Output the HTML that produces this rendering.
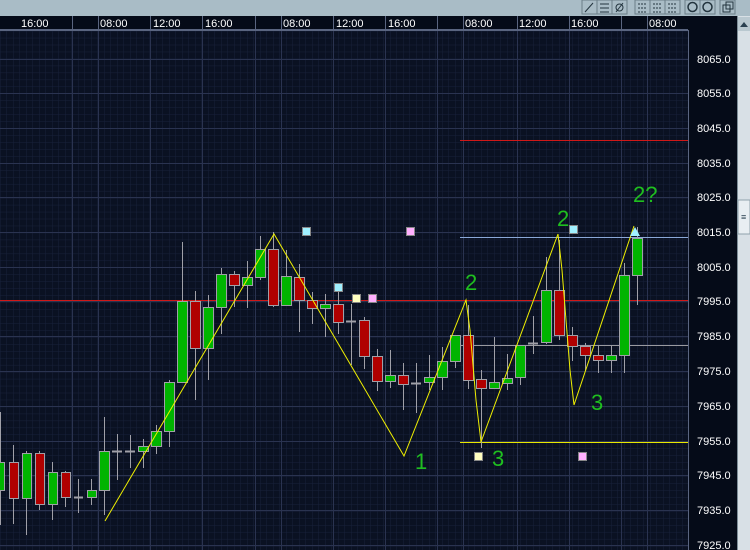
<!DOCTYPE html>
<html><head><meta charset="utf-8"><style>
body{margin:0;width:750px;height:550px;overflow:hidden;background:#a9bcc6;font-family:"Liberation Sans",sans-serif}
svg{position:absolute;left:0;top:0}
</style></head><body>
<svg width="750" height="550" xmlns="http://www.w3.org/2000/svg" font-family="Liberation Sans, sans-serif">
<defs>
<pattern id="mn" x="0" y="3" width="6.5" height="6.96" patternUnits="userSpaceOnUse">
<path d="M0 0H6.5M0 0V6.96" stroke="#18213a" stroke-width="1" fill="none"/></pattern>
</defs>
<rect x="0" y="0" width="750" height="16" fill="#a9bcc6"/>
<rect x="0" y="16" width="737" height="534" fill="#050b18"/>
<rect x="0" y="30" width="688" height="520" fill="#0a1122"/>
<rect x="0" y="30" width="688" height="520" fill="url(#mn)"/>
<g stroke="#2a3350" stroke-width="1">
<path d="M0 59.5H688M0 93.5H688M0 128.5H688M0 163.5H688M0 197.5H688M0 232.5H688M0 267.5H688M0 301.5H688M0 336.5H688M0 371.5H688M0 406.5H688M0 441.5H688M0 475.5H688M0 510.5H688M0 545.5H688"/>
<path d="M72.5 30V550M150.5 30V550M255.5 30V550M333.5 30V550M437.5 30V550M517.5 30V550M621.5 30V550M98.5 30V550M202.5 30V550M281.5 30V550M385.5 30V550M463.5 30V550M569.5 30V550M647.5 30V550"/>
</g>
<path d="M688.5 30V550M0 30.5H688" stroke="#5a6580"/>
<!-- time axis -->
<g stroke="#5a6580"><path d="M72.5 16V30M98.5 16V30M150.5 16V30M202.5 16V30M255.5 16V30M281.5 16V30M333.5 16V30M385.5 16V30M437.5 16V30M463.5 16V30M517.5 16V30M569.5 16V30M621.5 16V30M647.5 16V30M0 29.5H688"/></g>
<g fill="#fff" font-size="11">
<text x="21" y="27">16:00</text><text x="100" y="27">08:00</text><text x="153" y="27">12:00</text><text x="205" y="27">16:00</text>
<text x="283" y="27">08:00</text><text x="336" y="27">12:00</text><text x="388" y="27">16:00</text>
<text x="465" y="27">08:00</text><text x="519" y="27">12:00</text><text x="571" y="27">16:00</text><text x="649" y="27">08:00</text>
</g>
<!-- price axis -->
<g fill="#fff" font-size="11">
<text x="697" y="63">8065.0</text><text x="697" y="97">8055.0</text><text x="697" y="132">8045.0</text><text x="697" y="167">8035.0</text>
<text x="697" y="201">8025.0</text><text x="697" y="236">8015.0</text><text x="697" y="271">8005.0</text><text x="697" y="305">7995.0</text>
<text x="697" y="340">7985.0</text><text x="697" y="375">7975.0</text><text x="697" y="410">7965.0</text><text x="697" y="445">7955.0</text>
<text x="697" y="479">7945.0</text><text x="697" y="514">7935.0</text><text x="697" y="549">7925.0</text>
</g>
<!-- scrollbar -->
<rect x="737" y="16" width="13" height="534" fill="#d8e0e6"/>
<path d="M737.5 16V550" stroke="#7d8e98"/>
<rect x="738" y="17" width="12" height="14" fill="#b9c8d0"/>
<path d="M740 27L744 22L748 27Z" fill="#2a4050"/>
<rect x="738" y="200" width="12" height="34" fill="#e8eef2" stroke="#8fa2ac"/>
<text x="741" y="220" font-size="9" fill="#2a4050">≡</text>
<!-- toolbar -->
<g stroke="#6c7e88" fill="#a9bcc6">
<rect x="582" y="0" width="15" height="14"/><rect x="597" y="0" width="15" height="14"/><rect x="612" y="0" width="15" height="14"/>
<rect x="635" y="0" width="15" height="14"/><rect x="650" y="0" width="15" height="14"/><rect x="665" y="0" width="15" height="14"/>
<rect x="685" y="0" width="15" height="14"/><rect x="700" y="0" width="15" height="14"/><rect x="720" y="0" width="15" height="14"/>
</g>
<g stroke="#23343e" fill="none" stroke-width="1">
<path d="M585 12L593 3"/><path d="M600 4H609M600 8H609M600 12H609"/><circle cx="619.5" cy="7.5" r="3.5"/><path d="M616 12L623 3"/>
<path d="M638 4H647M638 8H647M638 12H647M653 4H662M653 8H662M653 12H662M668 4H677M668 8H677M668 12H677" stroke-dasharray="2 1"/>
<circle cx="692.5" cy="7" r="4.5" stroke-width="1.5"/><circle cx="707.5" cy="7" r="4.5" stroke-width="1.5"/>
<rect x="723" y="5" width="7" height="7"/><rect x="726" y="2" width="7" height="7"/>
</g>
<!-- horizontal lines -->
<path d="M0 300.5H688" stroke="#d01818"/>
<path d="M460 140.5H688" stroke="#d01818"/>
<path d="M460 237.5H688" stroke="#8aa8d8"/>
<path d="M460 345.5H688" stroke="#9a9aa0"/>
<path d="M460 442.5H688" stroke="#e8e800"/>
<!-- wicks -->
<g stroke="#a0a0a8" stroke-width="1">
<path d="M0.5 412V525M13.5 445V524M26.5 451V535M39.5 451V510M52.5 462V520M65.5 471V507M78.5 479V513M91.5 479V505M104.5 417V515M117.5 434V480M130.5 435V468M143.5 439V468M156.5 425V454M169.5 380V447M182.5 242V382M195.5 291V400M208.5 295V380M221.5 268V334M234.5 271V307M247.5 261V308M260.5 236V280M273.5 232V307M286.5 250V305M299.5 264V332M312.5 292V324M325.5 294V337M338.5 283V334M351.5 304V365M364.5 317V369M377.5 349V391M390.5 350V388M403.5 363V410M416.5 363V413M429.5 355V390M442.5 347V390M455.5 335V368M468.5 305V389M481.5 370V448M494.5 337V388M507.5 354V390M520.5 345V385M533.5 316V354M546.5 257V344M559.5 240V340M572.5 327V361M585.5 343V371M598.5 345V373M611.5 346V373M624.5 263V373M637.5 227V305"/>
</g>
<!-- bodies -->
<g stroke="#a0a0a8" stroke-width="1">
<g fill="#00b400">
<rect x="-4.5" y="462.5" width="9" height="28"/><rect x="22.5" y="453.5" width="9" height="45"/><rect x="48.5" y="472.5" width="9" height="32"/>
<rect x="87.5" y="490.5" width="9" height="7"/><rect x="99.5" y="451.5" width="10" height="39"/><rect x="138.5" y="446.5" width="10" height="5"/>
<rect x="151.5" y="431.5" width="10" height="15"/><rect x="164.5" y="382.5" width="10" height="49"/><rect x="177.5" y="301.5" width="10" height="81"/>
<rect x="203.5" y="307.5" width="10" height="41"/><rect x="216.5" y="274.5" width="10" height="33"/><rect x="242.5" y="277.5" width="10" height="8"/>
<rect x="255.5" y="249.5" width="10" height="28"/><rect x="281.5" y="276.5" width="10" height="29"/><rect x="320.5" y="304.5" width="10" height="4"/>
<rect x="385.5" y="375.5" width="10" height="6"/><rect x="424.5" y="377.5" width="10" height="5"/><rect x="437.5" y="361.5" width="10" height="16"/>
<rect x="450.5" y="335.5" width="10" height="26"/><rect x="489.5" y="382.5" width="10" height="6"/><rect x="502.5" y="378.5" width="10" height="5"/>
<rect x="515.5" y="345.5" width="10" height="32"/><rect x="541.5" y="290.5" width="10" height="52"/><rect x="606.5" y="355.5" width="10" height="5"/>
<rect x="619.5" y="275.5" width="10" height="80"/><rect x="632.5" y="238.5" width="10" height="37"/>
</g>
<g fill="#b00000">
<rect x="9.5" y="462.5" width="9" height="36"/><rect x="35.5" y="453.5" width="9" height="51"/><rect x="61.5" y="472.5" width="9" height="25"/>
<rect x="190.5" y="301.5" width="10" height="47"/><rect x="229.5" y="274.5" width="10" height="11"/><rect x="268.5" y="249.5" width="10" height="56"/>
<rect x="294.5" y="277.5" width="10" height="23"/><rect x="307.5" y="300.5" width="10" height="8"/><rect x="333.5" y="304.5" width="10" height="18"/>
<rect x="359.5" y="320.5" width="10" height="36"/><rect x="372.5" y="356.5" width="10" height="25"/><rect x="398.5" y="375.5" width="10" height="9"/>
<rect x="463.5" y="335.5" width="10" height="45"/><rect x="476.5" y="379.5" width="10" height="9"/><rect x="554.5" y="290.5" width="10" height="45"/>
<rect x="567.5" y="335.5" width="10" height="11"/><rect x="580.5" y="346.5" width="10" height="9"/><rect x="593.5" y="355.5" width="10" height="5"/>
</g>
</g>
<!-- dojis -->
<path d="M74 497.5H83M112 451.5H122M125 451.5H135M346 321.5H356M411 383.5H421M528 343.5H538" stroke="#a0a0a8" stroke-width="2"/>
<!-- zigzag -->
<polyline points="105,521 274,234 404,456 466,300 470,330 476,400 481,442 558,234 562,270 570,370 574,405 634,226" fill="none" stroke="#f0f000" stroke-width="1"/>
<!-- markers -->
<g stroke="#888" stroke-width="1">
<rect x="302.5" y="227.5" width="8" height="8" fill="#a0f0ff"/><rect x="406.5" y="227.5" width="8" height="8" fill="#ffb0ff"/>
<rect x="334.5" y="283.5" width="8" height="8" fill="#a0f0ff"/><rect x="352.5" y="294.5" width="8" height="8" fill="#ffffc0"/>
<rect x="368.5" y="294.5" width="8" height="8" fill="#ffb0ff"/><rect x="569.5" y="225.5" width="8" height="8" fill="#a0f0ff"/>
<rect x="474.5" y="452.5" width="8" height="8" fill="#ffffc0"/><rect x="578.5" y="452.5" width="8" height="8" fill="#ffb0ff"/>
</g>
<path d="M630 236L635 227L640 236Z" fill="#a0f0ff"/>
<g fill="#1fbf1f" font-size="22">
<text x="415" y="469">1</text><text x="465" y="290">2</text><text x="492" y="466">3</text>
<text x="557" y="226">2</text><text x="591" y="410">3</text><text x="633" y="202">2?</text>
</g>
</svg>
</body></html>
